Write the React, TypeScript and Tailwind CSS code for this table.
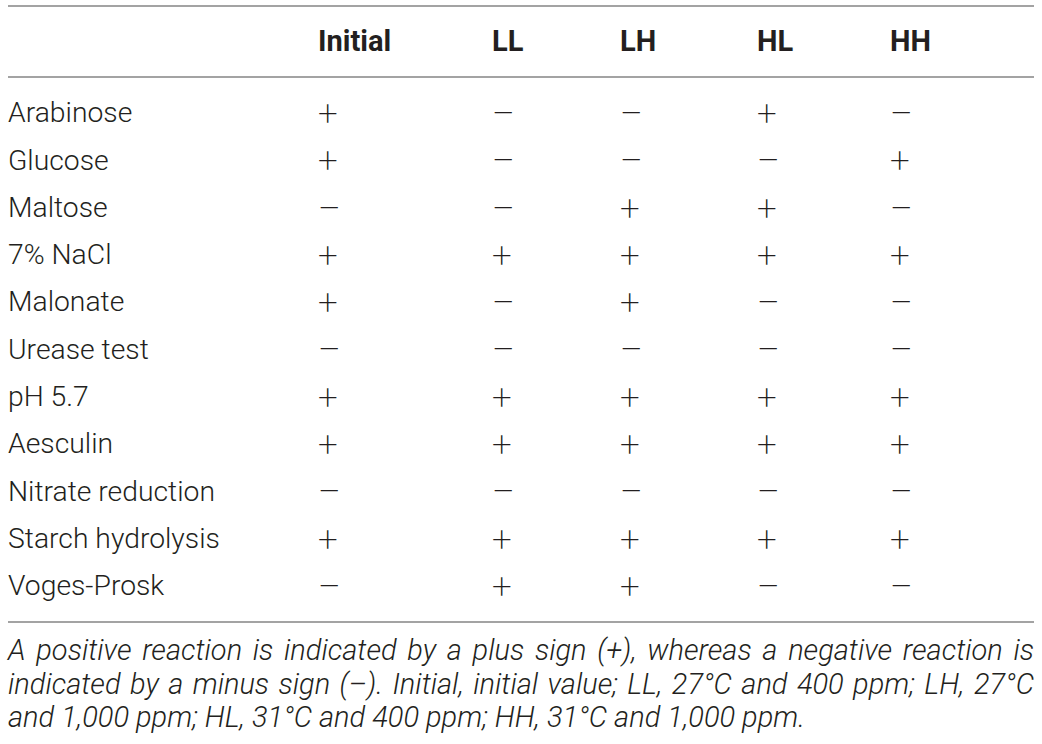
import React from "react";

const cols = ["Initial", "LL", "LH", "HL", "HH"];
const P = "+";
const M = "\u2013";
const rows: [string, string[]][] = [
  ["Arabinose", [P, M, M, P, M]],
  ["Glucose", [P, M, M, M, P]],
  ["Maltose", [M, M, P, P, M]],
  ["7% NaCl", [P, P, P, P, P]],
  ["Malonate", [P, M, P, M, M]],
  ["Urease test", [M, M, M, M, M]],
  ["pH 5.7", [P, P, P, P, P]],
  ["Aesculin", [P, P, P, P, P]],
  ["Nitrate reduction", [M, M, M, M, M]],
  ["Starch hydrolysis", [P, P, P, P, P]],
  ["Voges-Prosk", [M, P, P, M, M]],
];

const grid = "grid grid-cols-[310px_174px_128px_137px_133px_1fr]";

export default function App() {
  return (
    <div
      className="w-[1042px] h-[744px] bg-white text-[#231f20] px-[8px] pt-[5px]"
      style={{ fontFamily: "Roboto, 'Liberation Sans', sans-serif" }}
    >
      <div className="h-[2px] bg-[#a3a3a3]" />
      <div className={`${grid} h-[69px] items-center text-[29px] font-bold`}>
        <div />
        {cols.map((c) => (
          <div key={c}>{c}</div>
        ))}
      </div>
      <div className="h-[2px] bg-[#a3a3a3]" />
      <div className="pt-[13px] pb-[10px] font-light text-[28.3px]">
        {rows.map(([label, vals]) => (
          <div key={label} className={`${grid} h-[47.3px] items-center`}>
            <div>{label}</div>
            {vals.map((v, i) => (
              <div key={i} className="text-[35px] leading-none font-extralight">
                {v === P ? "+" : "\u2013"}
              </div>
            ))}
            <div />
          </div>
        ))}
      </div>
      <div className="h-[2px] bg-[#a3a3a3]" />
      <p className="pt-[11px] text-[29px] leading-[33.5px] italic font-light text-justify">
        A positive reaction is indicated by a plus sign (+), whereas a negative reaction is indicated by a minus sign (–). Initial, initial value; LL, 27°C and 400 ppm; LH, 27°C and 1,000 ppm; HL, 31°C and 400 ppm; HH, 31°C and 1,000 ppm.
      </p>
    </div>
  );
}
